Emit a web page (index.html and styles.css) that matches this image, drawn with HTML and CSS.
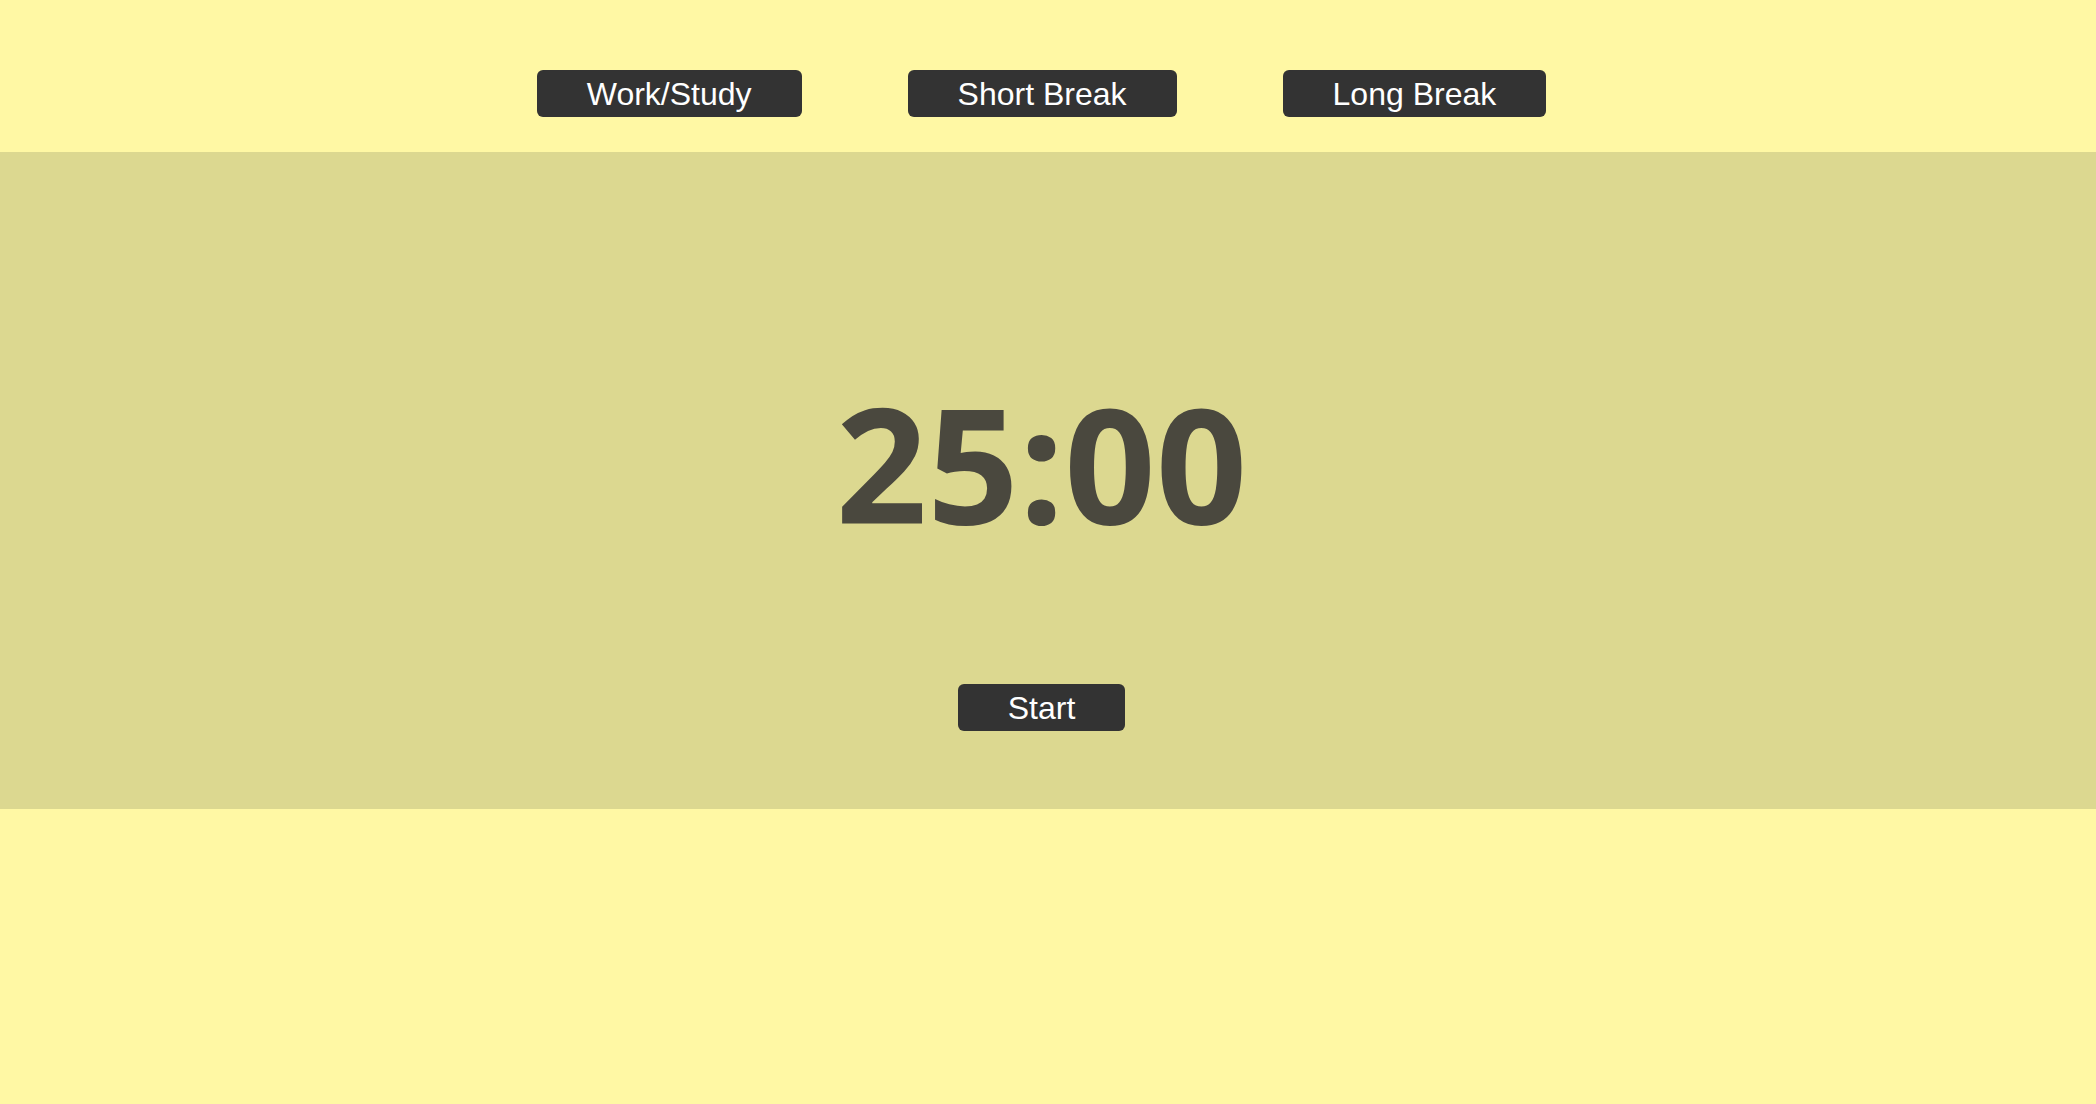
FILE: index.html
```html
<!DOCTYPE html>
<html lang="en">
<head>
<meta charset="utf-8">
<title>Pomodoro</title>
<link rel="stylesheet" href="styles.css">
</head>
<body>
  <header class="modes">
    <button class="btn">Work/Study</button>
    <button class="btn">Short Break</button>
    <button class="btn">Long Break</button>
  </header>
  <main class="panel">
    <div class="timer">25:00</div>
    <button class="btn">Start</button>
  </main>
</body>
</html>
```
FILE: styles.css
```css
html, body {
  margin: 0;
  padding: 0;
}
body {
  background: #fff8a4;
  font-family: "Liberation Sans", Arial, sans-serif;
  min-height: 1104px;
}
.modes {
  height: 152px;
  box-sizing: border-box;
  padding-top: 70px;
  padding-right: 13px;
  display: flex;
  justify-content: center;
  align-items: flex-start;
  gap: 106px;
}
.btn {
  font-family: "Liberation Sans", Arial, sans-serif;
  font-size: 32px;
  color: #ffffff;
  background: #333333;
  border: none;
  border-radius: 6px;
  height: 47px;
  box-sizing: border-box;
  padding: 2px 50px 1px;
  line-height: 44px;
  cursor: pointer;
}
.panel {
  height: 657px;
  background: #dcd890;
  display: flex;
  flex-direction: column;
  align-items: center;
  padding-right: 13px;
  box-sizing: border-box;
  padding-top: 230px;
}
.timer {
  font-family: "Open Sans", sans-serif;
  font-weight: 700;
  font-size: 160px;
  line-height: 160px;
  color: #4a483e;
  margin-bottom: 142px;
}
```
